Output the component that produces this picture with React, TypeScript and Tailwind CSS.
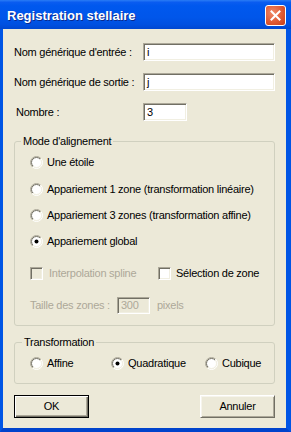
import React from "react";

const Radio = ({ checked }: { checked?: boolean }) => (
  <svg width="13" height="13" viewBox="0 0 13 13" className="shrink-0">
    <defs>
      <linearGradient id="rOuter" x1="0" y1="0" x2="1" y2="1">
        <stop offset="0.5" stopColor="#aca899" />
        <stop offset="0.5" stopColor="#ffffff" />
      </linearGradient>
      <linearGradient id="rInner" x1="0" y1="0" x2="1" y2="1">
        <stop offset="0.5" stopColor="#716f64" />
        <stop offset="0.5" stopColor="#f1efe2" />
      </linearGradient>
    </defs>
    <circle cx="6.5" cy="6.5" r="6" fill="none" stroke="url(#rOuter)" strokeWidth="1" />
    <circle cx="6.5" cy="6.5" r="5" fill="#ffffff" stroke="url(#rInner)" strokeWidth="1" />
    {checked && <circle cx="6.5" cy="6.5" r="2" fill="#000000" />}
  </svg>
);

const Check = ({ disabled }: { disabled?: boolean }) => (
  <div
    className={
      "w-[13px] h-[13px] shrink-0 border border-t-[#aca899] border-l-[#aca899] border-b-white border-r-white shadow-[inset_1px_1px_0_#716f64,inset_-1px_-1px_0_#f1efe2] " +
      (disabled ? "bg-[#ece9d8]" : "bg-white")
    }
  />
);

const Field = ({ value, className, disabled }: { value: string; className: string; disabled?: boolean }) => (
  <div
    className={
      "flex items-center pl-[3px] border border-t-[#aca899] border-l-[#aca899] border-b-white border-r-white shadow-[inset_1px_1px_0_#716f64,inset_-1px_-1px_0_#f1efe2] " +
      (disabled ? "bg-[#ece9d8] text-[#aca899] " : "bg-white text-black ") +
      className
    }
  >
    {value}
  </div>
);

export default function App() {
  return (
    <div className="w-[291px] h-[432px] flex flex-col font-['Liberation_Sans',Arial,sans-serif] text-[11px] text-black select-none">
      <div className="h-[29px] shrink-0 flex items-start justify-between pl-[7px] pr-[5px] pt-[5px] bg-[linear-gradient(to_bottom,#2a7cf5_0%,#0a5cf0_8%,#0058ee_20%,#0056ea_60%,#0050e0_85%,#0047d0_100%)]">
        <span className="text-white font-bold text-[13px] leading-[21px] [text-shadow:1px_1px_0_#0b2a8c]">
          Registration stellaire
        </span>
        <div className="w-[21px] h-[21px] rounded-[3px] border border-white bg-[radial-gradient(circle_at_35%_35%,#f08a68_0%,#e05a34_55%,#c63d16_100%)] flex items-center justify-center">
          <svg width="11" height="11" viewBox="0 0 11 11">
            <path d="M1.5 1.5 L9.5 9.5 M9.5 1.5 L1.5 9.5" stroke="#ffffff" strokeWidth="2" strokeLinecap="square" />
          </svg>
        </div>
      </div>

      <div className="flex-1 flex flex-col bg-[#ece9d8] tracking-[-0.25px] border-l-[3px] border-r-[5px] border-b-[4px] border-l-[#0055e5] border-r-[#0055e5] border-b-[#0043cc] px-[11px] pt-[14px] pb-[10px]">
        <div className="flex items-center h-[18px]">
          <span className="w-[129px]">Nom générique d'entrée :</span>
          <Field value="i" className="w-[132px] h-[18px]" />
        </div>
        <div className="flex items-center h-[18px] mt-[12px]">
          <span className="w-[129px]">Nom générique de sortie :</span>
          <Field value="j" className="w-[132px] h-[18px]" />
        </div>
        <div className="flex items-center h-[18px] mt-[12px]">
          <span className="w-[129px] pl-[2px]">Nombre :</span>
          <Field value="3" className="w-[44px] h-[18px]" />
        </div>

        <div className="mt-[20px] border border-[#d0d0bf] rounded-[3px] flex flex-col pb-[11px]">
          <span className="self-start -mt-[7px] ml-[6px] px-[2px] bg-[#ece9d8] leading-[13px]">Mode d'alignement</span>
          <div className="flex flex-col pl-[15px]">
            <div className="flex items-center h-[13px] mt-[8px] gap-[4px]">
              <Radio />
              <span>Une étoile</span>
            </div>
            <div className="flex items-center h-[13px] mt-[14px] gap-[4px]">
              <Radio />
              <span>Appariement 1 zone (transformation linéaire)</span>
            </div>
            <div className="flex items-center h-[13px] mt-[13px] gap-[4px]">
              <Radio />
              <span>Appariement 3 zones (transformation affine)</span>
            </div>
            <div className="flex items-center h-[13px] mt-[13px] gap-[4px]">
              <Radio checked />
              <span>Appariement global</span>
            </div>
            <div className="flex items-center h-[13px] mt-[19px]">
              <div className="flex items-center gap-[6px] w-[128px] text-[#aca899]">
                <Check disabled />
                <span>Interpolation spline</span>
              </div>
              <div className="flex items-center gap-[5px]">
                <Check />
                <span>Sélection de zone</span>
              </div>
            </div>
            <div className="flex items-center h-[17px] mt-[17px] text-[#aca899]">
              <span className="w-[87px]">Taille des zones :</span>
              <Field value="300" disabled className="w-[33px] h-[17px]" />
              <span className="ml-[7px]">pixels</span>
            </div>
          </div>
        </div>

        <div className="mt-[16px] border border-[#d0d0bf] rounded-[3px] flex flex-col pb-[13px]">
          <span className="self-start -mt-[7px] ml-[7px] px-[2px] bg-[#ece9d8] leading-[13px]">Transformation</span>
          <div className="flex items-center h-[13px] mt-[8px] pl-[15px]">
            <div className="flex items-center gap-[4px] w-[81px]">
              <Radio />
              <span>Affine</span>
            </div>
            <div className="flex items-center gap-[4px] w-[94px]">
              <Radio checked />
              <span>Quadratique</span>
            </div>
            <div className="flex items-center gap-[4px]">
              <Radio />
              <span>Cubique</span>
            </div>
          </div>
        </div>

        <div className="flex justify-between mt-[11px]">
          <div className="w-[75px] h-[23px] flex items-center justify-center border border-black shadow-[inset_1px_1px_0_#ffffff,inset_-1px_-1px_0_#716f64,inset_-2px_-2px_0_#aca899]">
            OK
          </div>
          <div className="w-[75px] h-[23px] flex items-center justify-center border border-t-white border-l-white border-b-[#716f64] border-r-[#716f64] shadow-[inset_1px_1px_0_#f6f4ec,inset_-1px_-1px_0_#aca899]">
            Annuler
          </div>
        </div>
      </div>
    </div>
  );
}
